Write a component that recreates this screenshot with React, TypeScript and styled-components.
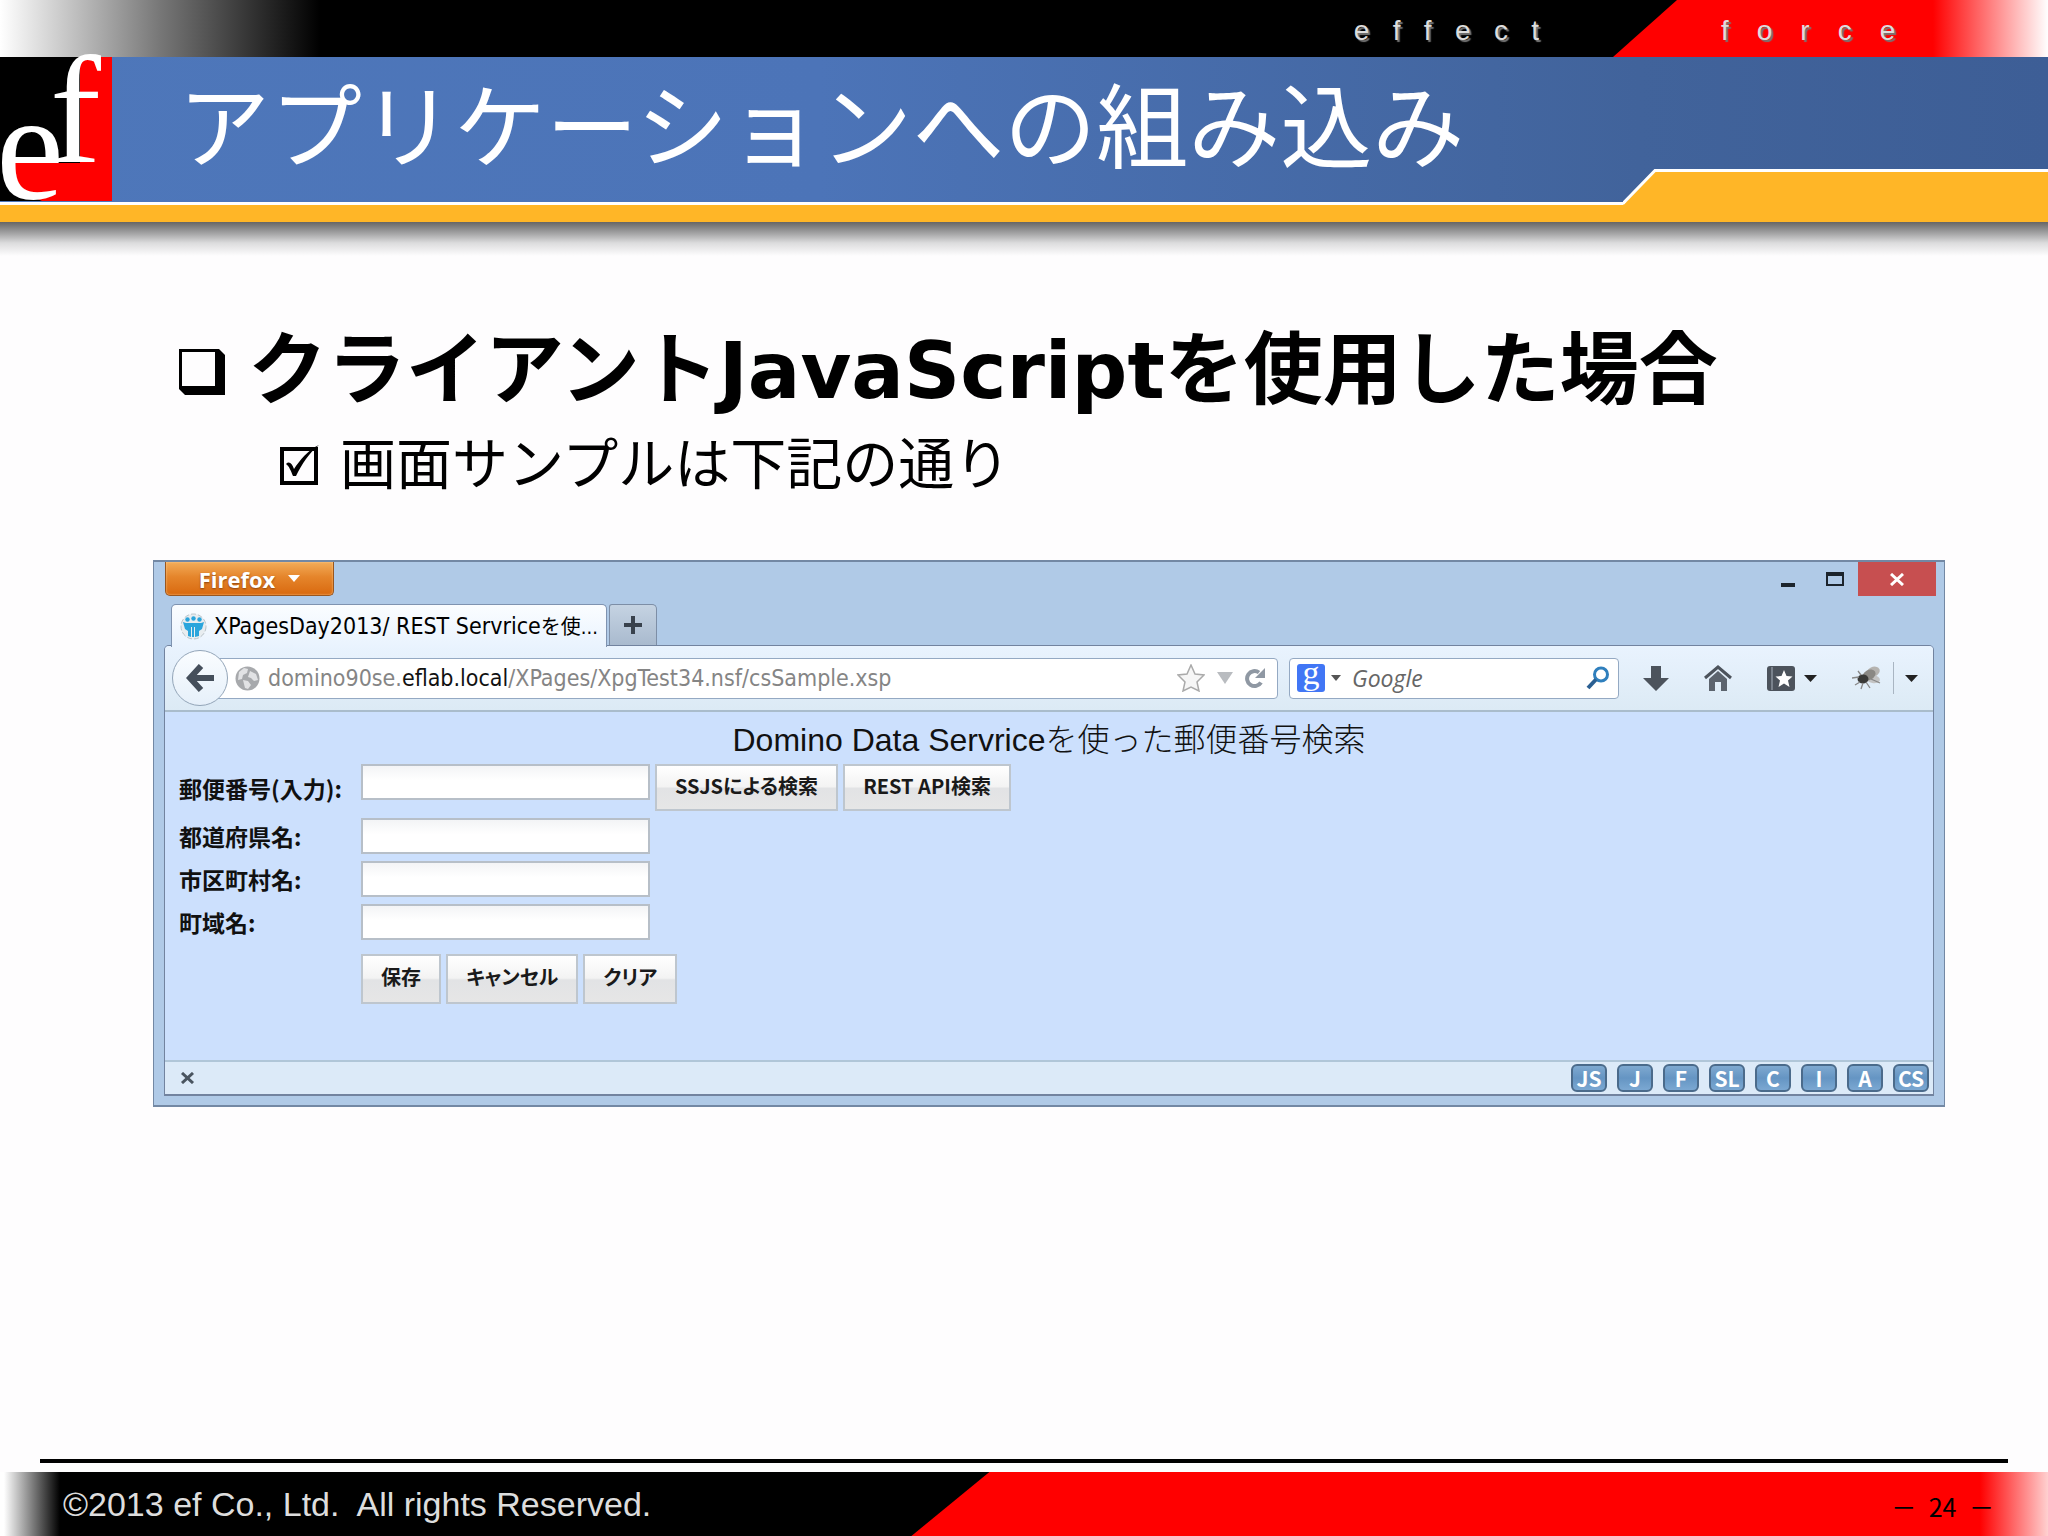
import React from "react";
import styled, { createGlobalStyle } from "styled-components";

const jp = `"Noto Sans CJK JP", sans-serif`;
const ui = `"DejaVu Sans Condensed", "Noto Sans CJK JP", sans-serif`;
const arial = `"Liberation Sans", "Noto Sans CJK JP", sans-serif`;

const GlobalStyle = createGlobalStyle`
  *, *::before, *::after { box-sizing: border-box; }
  body { margin: 0; background: #fefdfe; color: #000; font-family: ${jp}; }
  button, input { font: inherit; color: inherit; margin: 0; }
  button { padding: 0; border: 0; background: none; cursor: pointer; }
  h1, h2, h3, p, ul { margin: 0; padding: 0; }
  svg { flex: none; }
`;

const Slide = styled.div`
  display: flex;
  flex-direction: column;
  min-height: 100vh;
`;

/* ---------- slide header ---------- */

const BrandBand = styled.div`
  display: flex;
  justify-content: flex-end;
  height: 57px;
  background: linear-gradient(90deg, #fff 0, #777 160px, #000 320px);
  color: #ddd;
  font: 28px/62px ${arial};
  text-shadow: 2px 2px 1px #777;
  white-space: pre;
`;

const BrandBlack = styled.span`
  padding-right: 74px;
`;

const BrandRed = styled.span`
  width: 435px;
  padding-left: 108px;
  background: linear-gradient(90deg, #f00 320px, #fff 100%);
  clip-path: polygon(64px 0, 100% 0, 100% 100%, 0 100%);
`;

const TitleBar = styled.header`
  position: relative;
  display: flex;
  align-items: flex-start;
  height: 165px;
  background: linear-gradient(90deg, #4e77ba 0, #4c74b8 40%, #41639b 80%, #3d5e96 100%);
  border-bottom: 17px solid #ffb627;

  &::after {
    content: "";
    position: absolute;
    left: 0;
    right: 0;
    bottom: 0;
    height: 3px;
    background: #fff;
  }
`;

const Logo = styled.svg`
  width: 112px;
  height: 144px;
  overflow: visible;
`;

const Title = styled.h1`
  padding-left: 66px;
  color: #fff;
  font-size: 92px;
  font-weight: 400;
  line-height: 128px;
  white-space: nowrap;
`;

const Step = styled.svg`
  position: absolute;
  right: 0;
  bottom: 0;
  z-index: 1;
  width: 425px;
  height: 36px;
`;

/* ---------- slide body ---------- */

const Main = styled.main`
  flex: 1;
  padding: 94px 103px 0 153px;
  background: linear-gradient(#666 0, #a2a2a3 11px, #dcdcdd 21px, #fefdfe 34px);
`;

const Heading = styled.h2`
  display: flex;
  align-items: center;
  gap: 22px;
  padding-left: 25px;
  font-size: 79px;
  font-weight: 700;
  line-height: 96px;
  white-space: nowrap;
`;

const Latin = styled.span`
  font-family: "DejaVu Sans", sans-serif;
  font-size: 78px;
  line-height: 1;
`;

const SubPoint = styled.p`
  display: flex;
  align-items: center;
  gap: 19px;
  margin-top: 12px;
  padding-left: 126px;
  font-size: 56px;
  line-height: 72px;
  white-space: nowrap;
`;

/* ---------- browser window ---------- */

const Window = styled.section`
  margin-top: 64px;
  padding-bottom: 9px;
  border: 1px solid #7388a4;
  border-width: 2px 1px;
  background: #b0cae7;
  color: #111;
`;

const WindowBar = styled.div`
  display: flex;
  align-items: flex-start;
  height: 42px;
  padding: 0 8px 0 11px;
`;

const FirefoxButton = styled.button`
  display: flex;
  align-items: center;
  justify-content: center;
  gap: 13px;
  width: 169px;
  height: 34px;
  border: 1px solid #9a561e;
  border-top: 0;
  border-radius: 0 0 5px 5px;
  background: linear-gradient(#f3ac59, #e5852b 45%, #d9690f);
  box-shadow: inset 0 0 2px #ffd39b;
  color: #fff;
  font: 700 22px/32px "Open Sans", sans-serif;
  text-shadow: 0 1px 2px #8a4510;
`;

const Spring = styled.span`
  flex: 1;
`;

const WinButton = styled.button<{ $close?: boolean }>`
  display: flex;
  align-items: center;
  justify-content: center;
  width: ${(p) => (p.$close ? 78 : 47)}px;
  height: 34px;
  background: ${(p) => (p.$close ? "#c74f50" : "transparent")};
`;

const TabStrip = styled.div`
  display: flex;
  gap: 2px;
  height: 41px;
  padding-left: 17px;
`;

const Tab = styled.button`
  position: relative;
  z-index: 1;
  display: flex;
  align-items: center;
  gap: 7px;
  width: 436px;
  height: 43px;
  padding: 0 8px;
  border: 1px solid #7f93b0;
  border-bottom: 0;
  border-radius: 5px 5px 0 0;
  background: linear-gradient(#fbfdff, #e9f3fe);
  color: #000;
  font: 23px/42px ${ui};
  white-space: nowrap;
`;

const TabTail = styled.span`
  font-size: 20px;
`;

const NewTab = styled.button`
  display: flex;
  align-items: center;
  justify-content: center;
  width: 48px;
  border: 1px solid #7d8ea6;
  border-bottom: 0;
  border-radius: 3px 5px 0 0;
  background: linear-gradient(#c5d3e2, #a9bace);
`;

const Viewport = styled.div`
  margin: 0 10px;
  border: 1px solid #72839f;
  border-bottom-width: 2px;
  border-radius: 5px 5px 0 0;
  background: #cce0fd;
`;

const Toolbar = styled.div`
  display: flex;
  align-items: center;
  height: 66px;
  padding: 0 15px 0 7px;
  border-bottom: 2px solid #a9bccb;
  border-radius: 4px 4px 0 0;
  background: linear-gradient(#e9f3fe, #dceaf5);
`;

const BackButton = styled.button`
  position: relative;
  z-index: 1;
  display: flex;
  align-items: center;
  justify-content: center;
  width: 56px;
  height: 56px;
  border: 1px solid #93a5b8;
  border-radius: 50%;
  background: linear-gradient(#fafdff, #e6f0fa);
`;

const Field = styled.div`
  display: flex;
  align-items: center;
  height: 41px;
  border: 1px solid #94a9c3;
  border-radius: 4px;
  background: #fff;
`;

const AddressField = styled(Field)`
  flex: 1;
  gap: 8px;
  margin-left: -15px;
  padding: 0 11px 0 21px;
`;

const Address = styled.div`
  flex: 1;
  color: #858585;
  font: 23px/38px ${ui};
  white-space: nowrap;
  outline: 0;
`;

const Host = styled.span`
  color: #111;
`;

const IconButton = styled.button`
  display: flex;
  align-items: center;
`;

const AddressTools = styled.div`
  display: flex;
  align-items: center;
  gap: 12px;
`;

const SearchField = styled(Field)`
  width: 330px;
  margin-left: 11px;
  padding: 0 8px 0 7px;
`;

const Engine = styled.button`
  display: flex;
  align-items: center;
  gap: 6px;
`;

const EngineMark = styled.span`
  width: 28px;
  height: 28px;
  border-radius: 3px;
  background: #4176f5;
  color: #fff;
  font: 34px/18px "Liberation Serif", serif;
  text-align: center;
`;

const SearchInput = styled.input`
  flex: 1;
  min-width: 0;
  padding: 0 0 0 11px;
  border: 0;
  outline: 0;
  background: none;
  font: italic 23px/36px "Open Sans", sans-serif;

  &::placeholder { color: #666; opacity: 1; }
`;

const ToolIcons = styled.div`
  display: flex;
  align-items: center;
  gap: 35px;
  padding-left: 24px;
`;

const IconPair = styled.div<{ $gap: number }>`
  display: flex;
  align-items: center;
  gap: ${(p) => p.$gap}px;
`;

const Divider = styled.span`
  width: 1px;
  height: 32px;
  background: #a9b5c2;
`;

/* ---------- page inside the browser ---------- */

const Page = styled.div`
  padding: 4px 14px 56px;
`;

const PageTitle = styled.h3`
  font: 400 32px/48px ${arial};
  text-align: center;
`;

const Thin = styled.span`
  font-family: ${jp};
  font-weight: 300;
  line-height: 1;
`;

const Form = styled.form`
  display: grid;
  grid-template-columns: 182px 1fr;
  row-gap: 7px;
  align-items: center;
`;

const Label = styled.label`
  font-size: 23px;
  font-weight: 700;
  line-height: 32px;
  white-space: nowrap;
`;

const Controls = styled.div<{ $actions?: boolean }>`
  display: flex;
  align-items: flex-start;
  gap: 5px;
  grid-column: 2;
  margin-top: ${(p) => (p.$actions ? 7 : 0)}px;
`;

const TextInput = styled.input`
  width: 289px;
  height: 36px;
  padding: 0 6px;
  border: 2px solid #b7bfc8;
  background: linear-gradient(#f3f4f6, #fff 45%);
  font-size: 20px;
`;

const FormButton = styled.button<{ $tall?: boolean }>`
  height: ${(p) => (p.$tall ? 50 : 47)}px;
  padding: 0 18px 4px;
  border: 2px solid #bec6ce;
  background: linear-gradient(#fff, #f3f3f3 48%, #e2e3e5 52%, #e6e6e6);
  color: #1a1a1a;
  font-size: 20px;
  font-weight: 700;
  font-feature-settings: "palt";
  line-height: 24px;
  white-space: nowrap;
`;

const StatusBar = styled.div`
  display: flex;
  align-items: center;
  justify-content: space-between;
  height: 34px;
  padding: 0 4px 0 15px;
  border-top: 2px solid #b0c6d8;
  background: #dceaf8;
`;

const Badges = styled.div`
  display: flex;
  gap: 10px;
`;

const Badge = styled.button`
  width: 36px;
  height: 28px;
  border: 2px solid #4b6b8b;
  border-radius: 6px;
  background: linear-gradient(#7fa9d0, #6595c3 50%, #7ba8d2);
  color: #fff;
  font: 700 21px/22px "Noto Sans CJK JP", sans-serif;
`;

/* ---------- slide footer ---------- */

const Rule = styled.hr`
  width: auto;
  height: 4px;
  margin: 0 40px 9px;
  border: 0;
  background: #000;
`;

const Footer = styled.footer`
  display: flex;
  height: 64px;
  background: linear-gradient(90deg, #fff 4px, #000 60px);
  line-height: 64px;
`;

const Copyright = styled.p`
  flex: 1;
  padding-left: 63px;
  color: #ddd;
  font-family: ${arial};
  font-size: 34px;
  white-space: pre;
`;

const FooterRed = styled.div`
  width: 55.5%;
  padding-right: 54px;
  background: linear-gradient(90deg, #f00 calc(100% - 68px), #ffd0d0 100%);
  clip-path: polygon(78px 0, 100% 0, 100% 100%, 0 100%);
  font-size: 25px;
  line-height: 68px;
  text-align: right;
`;

/* ---------- drawings ---------- */

const Caret = ({ w = 12, h = 7, fill = "#222" }: { w?: number; h?: number; fill?: string }) => (
  <svg width={w} height={h} viewBox="0 0 12 7" preserveAspectRatio="none" aria-hidden="true">
    <path d="M0 0h12L6 7z" fill={fill} />
  </svg>
);

const BoxBullet = () => (
  <svg width="48" height="96" viewBox="0 0 48 96" aria-hidden="true">
    <path d="M1 33h40l6 6v40H7l-6-6z" fill="#000" />
    <path d="M4 36h33v34H4z" fill="#fefdfe" />
  </svg>
);

const CheckBullet = () => (
  <svg width="42" height="72" viewBox="0 0 42 72" aria-hidden="true">
    <path d="M3 25h34v34H3z" fill="none" stroke="#000" strokeWidth="4" />
    <path d="M7 40c3-3 6-1 8 5C21 36 29 26 40 21c-10 8-17 19-23 31h-3C12 47 10 42 7 40z" fill="#000" />
  </svg>
);

const Globe = () => (
  <svg width="25" height="25" viewBox="0 0 25 25" aria-hidden="true">
    <circle cx="12.5" cy="12.5" r="12" fill="#a7a9ac" />
    <path d="M4 6l5-4 4 1-1 4-4 2-1 4-4 1zM15 5l6 3 2 6-4 1-3-3-3-1zM8 14l5 1 3 4-3 4-3-1z" fill="#e1e2e4" />
  </svg>
);

const Favicon = () => (
  <svg width="27" height="27" viewBox="0 0 27 27" aria-hidden="true">
    <circle cx="13.5" cy="13.5" r="12.5" fill="#e8edf0" stroke="#b8c2c8" strokeDasharray="5 2" />
    <g fill="#2aa5dc">
      <circle cx="7.5" cy="6.5" r="2.2" />
      <circle cx="13.5" cy="5.5" r="2.2" />
      <circle cx="19.5" cy="6.5" r="2.2" />
      <path d="M3 9l3 1h15l3-1-2 7-3 2v5l-4 1V14h-1v10h-2V14h-1v10l-3-1v-5l-3-2z" />
    </g>
  </svg>
);

const Star = () => (
  <svg width="28" height="28" viewBox="0 0 28 28" aria-hidden="true">
    <path d="M14 1l4 9 9 1-7 7 2 9-8-4-8 4 2-9-7-7 9-1z" fill="#f6f6f6" stroke="#aaa" strokeWidth="1.5" />
  </svg>
);

const Reload = () => (
  <svg width="21" height="22" viewBox="0 0 21 22" aria-hidden="true">
    <path d="M16 15.5A7.5 7.5 0 1 1 14 5.5" fill="none" stroke="#8f98a3" strokeWidth="4" />
    <path d="M20 1v10H10z" fill="#8f98a3" />
  </svg>
);

const Magnifier = () => (
  <svg width="24" height="24" viewBox="0 0 24 24" aria-hidden="true">
    <circle cx="15" cy="8.5" r="6.5" fill="none" stroke="#2f7fbd" strokeWidth="3" />
    <path d="M10 13.5L2 22" stroke="#2a5f92" strokeWidth="4" />
  </svg>
);

const Fly = () => (
  <svg width="30" height="26" viewBox="0 0 30 26" aria-hidden="true">
    <ellipse cx="21" cy="7" rx="7" ry="5" fill="#b5b3b0" transform="rotate(-25 21 7)" />
    <ellipse cx="21" cy="14" rx="7" ry="4" fill="#c4c4c4" transform="rotate(10 21 14)" />
    <ellipse cx="17" cy="10" rx="7" ry="5" fill="#8a8884" transform="rotate(-30 17 10)" />
    <ellipse cx="11" cy="14" rx="5.5" ry="4.5" fill="#393937" />
    <path d="M7 12L0 13M8 17l-5 3M11 18l-2 6M14 17l4 6M9 10L6 6M19 14l9 4" stroke="#888" strokeWidth="1.3" fill="none" />
  </svg>
);

const rows = [
  { id: "pref", label: "都道府県名:" },
  { id: "city", label: "市区町村名:" },
  { id: "town", label: "町域名:" },
];

const badges = ["JS", "J", "F", "SL", "C", "I", "A", "CS"];

export default function App() {
  return (
    <>
      <GlobalStyle />
      <Slide>
        <BrandBand>
          <BrandBlack>{"e   f   f   e   c   t"}</BrandBlack>
          <BrandRed>{"f\u2003o\u2003r\u2003c\u2003e"}</BrandRed>
        </BrandBand>
        <TitleBar>
          <Logo viewBox="0 0 112 144" role="img" aria-label="ef">
            <path d="M0 0h112v144H0z" fill="#000" />
            <path d="M80 0h32v144H42L14 132V106h66z" fill="#f00" />
            <text fill="#fff" fontFamily="Liberation Serif, serif" fontSize="153">
              <tspan x="-4" y="142">e</tspan>
              <tspan x="50" y="105">f</tspan>
            </text>
          </Logo>
          <Title>アプリケーションへの組み込み</Title>
          <Step viewBox="0 0 425 36" aria-hidden="true">
            <path d="M0 36L32 3h393v33z" fill="#ffb627" />
            <path d="M0 34.5L32 1.5h393" fill="none" stroke="#fff" strokeWidth="3" />
          </Step>
        </TitleBar>

        <Main>
          <Heading>
            <BoxBullet />
            <span>
              クライアント<Latin>JavaScript</Latin>を使用した場合
            </span>
          </Heading>
          <SubPoint>
            <CheckBullet />
            画面サンプルは下記の通り
          </SubPoint>

          <Window aria-label="Firefox">
            <WindowBar>
              <FirefoxButton type="button">
                Firefox <Caret fill="#fff" />
              </FirefoxButton>
              <Spring />
              <WinButton type="button" aria-label="Minimize">
                <svg width="14" height="18" aria-hidden="true">
                  <path d="M0 13h14v4H0z" fill="#1c242c" />
                </svg>
              </WinButton>
              <WinButton type="button" aria-label="Maximize">
                <svg width="18" height="14" aria-hidden="true">
                  <path d="M1 2h16v11H1z" fill="none" stroke="#1c242c" strokeWidth="2" />
                  <path d="M0 0h18v4H0z" fill="#1c242c" />
                </svg>
              </WinButton>
              <WinButton type="button" $close aria-label="Close">
                <svg width="14" height="13" aria-hidden="true">
                  <path d="M1 1l12 11M13 1L1 12" stroke="#fff" strokeWidth="3" />
                </svg>
              </WinButton>
            </WindowBar>

            <TabStrip>
              <Tab type="button">
                <Favicon />
                <span>
                  XPagesDay2013/ REST Servrice<TabTail>を使...</TabTail>
                </span>
              </Tab>
              <NewTab type="button" aria-label="New tab">
                <svg width="18" height="18" aria-hidden="true">
                  <path d="M9 0v18M0 9h18" stroke="#39424d" strokeWidth="4" />
                </svg>
              </NewTab>
            </TabStrip>

            <Viewport>
              <Toolbar>
                <BackButton type="button" aria-label="Back">
                  <svg width="28" height="28" aria-hidden="true">
                    <path d="M15 2L4 14l11 12M4 14h24" fill="none" stroke="#454f5b" strokeWidth="6" />
                  </svg>
                </BackButton>
                <AddressField>
                  <Globe />
                  <Address role="textbox" aria-label="URL" contentEditable suppressContentEditableWarning spellCheck={false}>
                    domino90se.<Host>eflab.local</Host>/XPages/XpgTest34.nsf/csSample.xsp
                  </Address>
                  <AddressTools>
                    <IconButton type="button" aria-label="Bookmark">
                      <Star />
                    </IconButton>
                    <IconButton type="button" aria-label="History">
                      <Caret w={16} h={12} fill="#b9bcc0" />
                    </IconButton>
                    <IconButton type="button" aria-label="Reload">
                      <Reload />
                    </IconButton>
                  </AddressTools>
                </AddressField>
                <SearchField>
                  <Engine type="button" aria-label="Search engine">
                    <EngineMark>g</EngineMark>
                    <Caret w={10} h={6} fill="#555" />
                  </Engine>
                  <SearchInput type="text" placeholder="Google" aria-label="Google" />
                  <IconButton type="button" aria-label="Search">
                    <Magnifier />
                  </IconButton>
                </SearchField>
                <ToolIcons>
                  <IconButton type="button" aria-label="Downloads">
                    <svg width="26" height="26" aria-hidden="true">
                      <path d="M8 1h10v12h8L13 26 0 13h8z" fill="#4c535c" />
                    </svg>
                  </IconButton>
                  <IconButton type="button" aria-label="Home">
                    <svg width="28" height="26" aria-hidden="true">
                      <path d="M1 13L14 2l13 11" fill="none" stroke="#4c535c" strokeWidth="3" />
                      <path d="M5 14l9-8 9 8v12h-6v-9h-6v9H5z" fill="#5c646e" />
                    </svg>
                  </IconButton>
                  <IconPair $gap={9}>
                    <IconButton type="button" aria-label="Bookmarks">
                      <svg width="28" height="25" aria-hidden="true">
                        <rect width="28" height="25" rx="3" fill="#4c535c" />
                        <path d="M5 1v23" stroke="#7a828c" strokeWidth="2" />
                        <path d="M17 4l2.5 6 6 .5-4.5 4 1.5 6.500-5.500-3.500-5.500 3.500 1.500-6.500-4.500-4 6-.5z" fill="#fff" />
                      </svg>
                    </IconButton>
                    <Caret w={13} />
                  </IconPair>
                  <IconPair $gap={11}>
                    <IconButton type="button" aria-label="Add-on">
                      <Fly />
                    </IconButton>
                    <Divider />
                    <Caret w={13} />
                  </IconPair>
                </ToolIcons>
              </Toolbar>

              <Page>
                <PageTitle>
                  Domino Data Servrice<Thin>を使った郵便番号検索</Thin>
                </PageTitle>
                <Form onSubmit={(e) => e.preventDefault()}>
                  <Label htmlFor="zip">郵便番号(入力):</Label>
                  <Controls>
                    <TextInput id="zip" type="text" />
                    <FormButton type="button">SSJSによる検索</FormButton>
                    <FormButton type="button">REST API検索</FormButton>
                  </Controls>
                  {rows.map((r) => (
                    <React.Fragment key={r.id}>
                      <Label htmlFor={r.id}>{r.label}</Label>
                      <TextInput id={r.id} type="text" />
                    </React.Fragment>
                  ))}
                  <Controls $actions>
                    <FormButton type="submit" $tall>保存</FormButton>
                    <FormButton type="button" $tall>キャンセル</FormButton>
                    <FormButton type="reset" $tall>クリア</FormButton>
                  </Controls>
                </Form>
              </Page>

              <StatusBar>
                <IconButton type="button" aria-label="Close bar">
                  <svg width="15" height="12" aria-hidden="true">
                    <path d="M2 1l11 10M13 1L2 11" stroke="#4a5560" strokeWidth="3" />
                  </svg>
                </IconButton>
                <Badges>
                  {badges.map((b) => (
                    <Badge key={b} type="button">{b}</Badge>
                  ))}
                </Badges>
              </StatusBar>
            </Viewport>
          </Window>
        </Main>

        <Rule />
        <Footer>
          <Copyright>{"©2013 ef Co., Ltd.  All rights Reserved."}</Copyright>
          <FooterRed>{"－\u200224\u2002－"}</FooterRed>
        </Footer>
      </Slide>
    </>
  );
}
